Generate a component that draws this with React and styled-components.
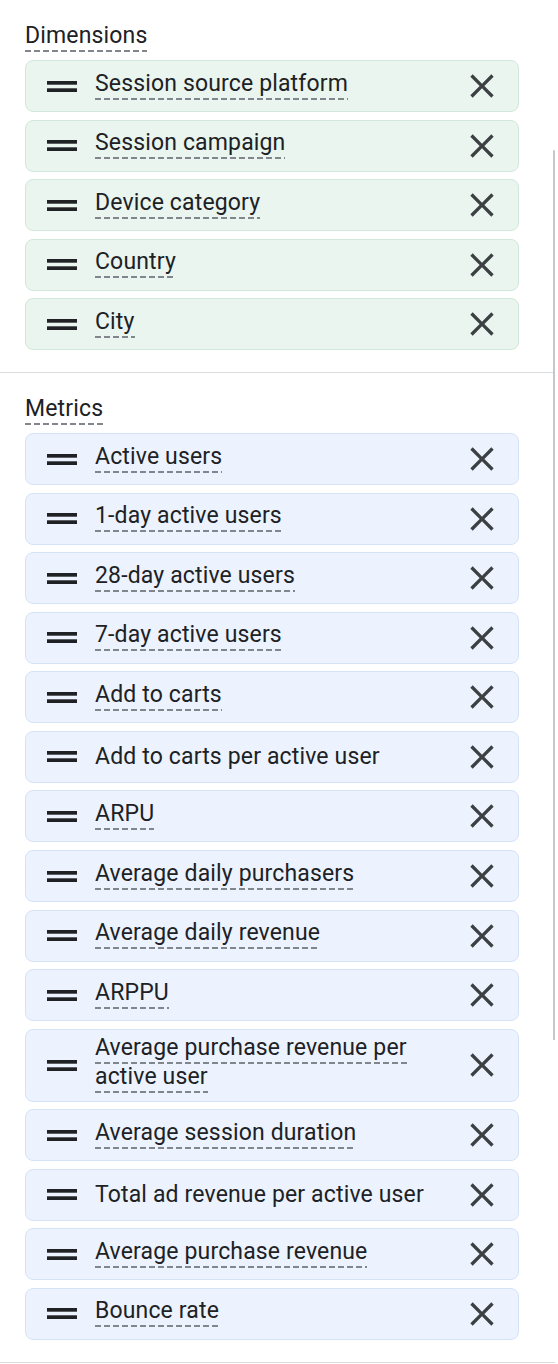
import React from "react";
import styled, { createGlobalStyle } from "styled-components";

const GlobalStyle = createGlobalStyle`
  html, body {
    margin: 0;
    padding: 0;
    background: #ffffff;
  }
  body {
    font-family: Roboto, "Liberation Sans", Arial, sans-serif;
    color: #202124;
    -webkit-font-smoothing: antialiased;
  }
`;

const dimensions = [
  { name: "Session source platform", dashed: true },
  { name: "Session campaign", dashed: true },
  { name: "Device category", dashed: true },
  { name: "Country", dashed: true },
  { name: "City", dashed: true },
];

const metrics = [
  { name: "Active users", dashed: true },
  { name: "1-day active users", dashed: true },
  { name: "28-day active users", dashed: true },
  { name: "7-day active users", dashed: true },
  { name: "Add to carts", dashed: true },
  { name: "Add to carts per active user", dashed: false },
  { name: "ARPU", dashed: true },
  { name: "Average daily purchasers", dashed: true },
  { name: "Average daily revenue", dashed: true },
  { name: "ARPPU", dashed: true },
  { name: "Average purchase revenue per active user", dashed: true },
  { name: "Average session duration", dashed: true },
  { name: "Total ad revenue per active user", dashed: false },
  { name: "Average purchase revenue", dashed: true },
  { name: "Bounce rate", dashed: true },
];

const palette = {
  dimension: { bg: "#e9f5ee", border: "#d2e8da" },
  metric: { bg: "#ecf3fe", border: "#d5e3f8" },
};

function DragHandle() {
  return (
    <HandleIcon width="30" height="11" viewBox="0 0 30 11">
      <rect x="0" y="0" width="30" height="3.7" fill="#202124" />
      <rect x="0" y="7.3" width="30" height="3.7" fill="#202124" />
    </HandleIcon>
  );
}

function CloseIcon() {
  return (
    <CloseSvg width="40" height="40" viewBox="0 0 24 24">
      <path
        fill="#3c4043"
        d="M19 6.41L17.59 5 12 10.59 6.41 5 5 6.41 10.59 12 5 17.59 6.41 19 12 13.41 17.59 19 19 17.59 13.41 12z"
      />
    </CloseSvg>
  );
}

function ChipList({ title, items, kind }) {
  return (
    <Section>
      <Heading>
        <Label $dashed>{title}</Label>
      </Heading>
      <List>
        {items.map((item) => (
          <Chip key={item.name} $kind={kind}>
            <DragHandle />
            <ChipText $dashed={item.dashed}>
              <Label $dashed={item.dashed}>{item.name}</Label>
            </ChipText>
            <CloseButton aria-label={`Remove ${item.name}`}>
              <CloseIcon />
            </CloseButton>
          </Chip>
        ))}
      </List>
    </Section>
  );
}

export default function App() {
  return (
    <>
      <GlobalStyle />
      <Panel>
        <ChipList title="Dimensions" items={dimensions} kind="dimension" />
        <ChipList title="Metrics" items={metrics} kind="metric" />
        <ScrollEdge />
      </Panel>
    </>
  );
}

const Panel = styled.div`
  position: relative;
  width: 555px;
  min-height: 1364px;
`;

const Section = styled.section`
  padding: 24px 36px 22px 25px;
  border-bottom: 1px solid #dadce0;
`;

const Heading = styled.div`
  font-size: 23px;
  letter-spacing: 0.15px;
  line-height: 24px;
  margin-bottom: 12px;
`;

const Label = styled.span`
  padding-bottom: ${(p) => (p.$dashed ? "3px" : "0")};
  background-image: ${(p) =>
    p.$dashed
      ? "repeating-linear-gradient(to right, #80868b 0 6px, transparent 6px 9px)"
      : "none"};
  background-size: 100% 2px;
  background-repeat: no-repeat;
  background-position: 0 100%;
  -webkit-box-decoration-break: clone;
  box-decoration-break: clone;
`;

const List = styled.div`
  display: flex;
  flex-direction: column;
  gap: 7.55px;
`;

const Chip = styled.div`
  box-sizing: border-box;
  display: flex;
  align-items: center;
  min-height: 52px;
  padding: 3.5px 16px 3.5px 21px;
  background: ${(p) => palette[p.$kind].bg};
  border: 1px solid ${(p) => palette[p.$kind].border};
  border-radius: 8px;
`;

const HandleIcon = styled.svg`
  flex: none;
  display: block;
  margin-right: 18px;
`;

const ChipText = styled.div`
  flex: 1;
  min-width: 0;
  max-width: 350px;
  font-size: 23px;
  letter-spacing: 0.15px;
  line-height: 29px;
  padding-bottom: ${(p) => (p.$dashed ? "6px" : "0")};
  color: #202124;
`;

const CloseButton = styled.button`
  flex: none;
  margin-left: auto;
  padding: 0;
  border: none;
  background: transparent;
  display: flex;
  align-items: center;
  justify-content: center;
  cursor: pointer;
`;

const CloseSvg = styled.svg`
  display: block;
`;

const ScrollEdge = styled.div`
  position: absolute;
  left: 553px;
  top: 150px;
  width: 2px;
  height: 890px;
  background: #c4c7cc;
  border-top-left-radius: 2px;
  border-top-right-radius: 2px;
`;
